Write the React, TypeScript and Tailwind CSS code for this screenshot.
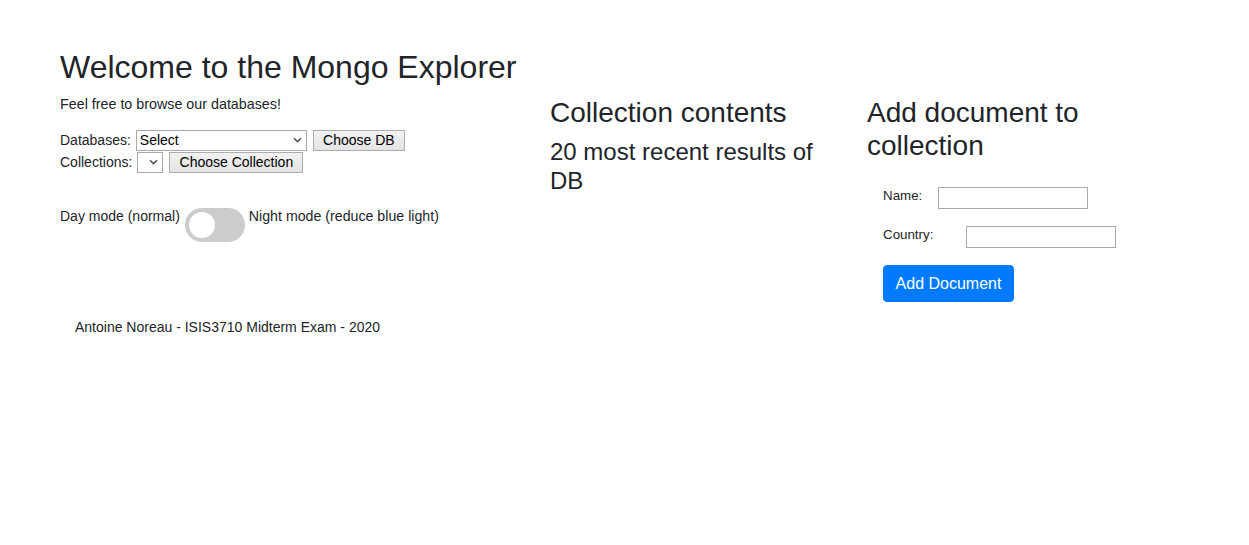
const font = { fontFamily: '"Liberation Sans", Arial, sans-serif' };

const Chevron: React.FC = () => (
  <svg
    className="pointer-events-none absolute right-[5px] top-1/2 -translate-y-1/2"
    width="9"
    height="6"
    viewBox="0 0 9 6"
  >
    <path d="M1 1.2 L4.5 4.6 L8 1.2" fill="none" stroke="#555" strokeWidth="1.6" />
  </svg>
);

const Select: React.FC<{ width: string; value?: string }> = ({ width, value }) => (
  <div className={`relative h-[21px] ${width}`}>
    <select
      className="h-full w-full appearance-none border border-[#a9a9a9] bg-white pl-[3px] text-[14px] leading-none text-black outline-none"
      defaultValue={value ?? ""}
    >
      {value ? <option>{value}</option> : <option value=""></option>}
    </select>
    <Chevron />
  </div>
);

const GrayButton: React.FC<{ label: string; width: string }> = ({ label, width }) => (
  <button
    className={`ml-[6px] h-[21px] ${width} border border-[#adadad] bg-gradient-to-b from-[#f2f2f2] to-[#e4e4e4] text-[14px] leading-none text-black`}
  >
    {label}
  </button>
);

export default function App() {
  return (
    <div className="min-h-[545px] bg-white pl-[60px] pt-[48px] text-[#212529]" style={font}>
      <h2 className="mb-2 text-[32px] leading-[38px] font-normal">Welcome to the Mongo Explorer</h2>

      <div className="flex">
        {/* left column */}
        <div className="w-[490px] text-[14px] leading-[21px]">
          <p className="mb-[14px] text-[14.3px]">Feel free to browse our databases!</p>

          <div className="flex h-[22px] items-center">
            <span className="mr-[5px]">Databases:</span>
            <Select width="w-[171px]" value="Select" />
            <GrayButton label="Choose DB" width="w-[92px]" />
          </div>
          <div className="flex h-[22px] items-center">
            <span className="mr-[5px]">Collections:</span>
            <Select width="w-[26px]" />
            <GrayButton label="Choose Collection" width="w-[134px]" />
          </div>

          <div className="mt-[33px] flex items-start">
            <span>Day mode (normal)</span>
            <label className="relative ml-[5px] mr-[4px] mt-[2px] inline-block h-[34px] w-[60px] cursor-pointer rounded-full bg-[#ccc]">
              <input type="checkbox" className="peer sr-only" />
              <span className="absolute left-[4px] top-[4px] h-[26px] w-[26px] rounded-full bg-white" />
            </label>
            <span className="text-[14.2px]">Night mode (reduce blue light)</span>
          </div>
        </div>

        {/* middle column */}
        <div className="w-[317px] pr-[30px] pt-[2px]">
          <h3 className="mb-[7px] text-[28px] leading-[34px] font-normal">Collection contents</h3>
          <h4 className="text-[24px] leading-[29px] font-normal">20 most recent results of DB</h4>
        </div>

        {/* right column */}
        <div className="w-[287px] pt-[2px]">
          <h3 className="text-[28px] leading-[33px] font-normal">Add document to collection</h3>
          <form className="mt-[25px] flex flex-col gap-[17px] pl-[16px] text-[13.33px]">
            <div className="flex items-start">
              <label className="w-[55px] leading-[18px]">Name:</label>
              <input className="h-[22px] w-[150px] border border-[#a9a9a9] bg-white outline-none" />
            </div>
            <div className="flex items-start">
              <label className="w-[83px] leading-[18px]">Country:</label>
              <input className="h-[22px] w-[150px] border border-[#a9a9a9] bg-white outline-none" />
            </div>
            <div>
              <button
                type="button"
                className="h-[37px] w-[131px] rounded-[4px] border border-[#007bff] bg-[#007bff] text-[16px] text-white"
              >
                Add Document
              </button>
            </div>
          </form>
        </div>
      </div>

      <p className="mt-[15px] pl-[15px] text-[14px] leading-[21px]">Antoine Noreau - ISIS3710 Midterm Exam - 2020</p>
    </div>
  );
}
